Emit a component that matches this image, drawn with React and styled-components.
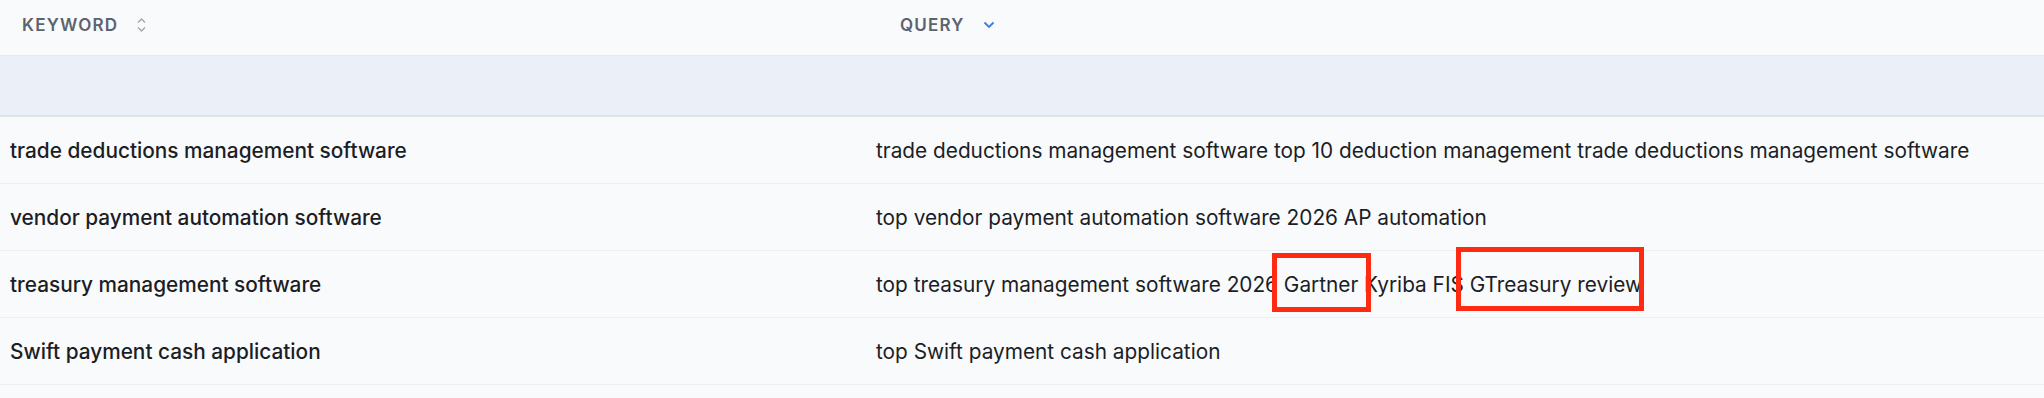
import React from "react";
import styled, { createGlobalStyle } from "styled-components";

const Global = createGlobalStyle`
  html, body { margin: 0; padding: 0; background: #f9fafb; }
  body { font-family: Inter, "Noto Sans", sans-serif; }
`;

const Table = styled.div`
  position: relative;
  width: 2044px;
  height: 398px;
  overflow: hidden;
  background: #f9fafb;
`;

const HeaderRow = styled.div`
  display: grid;
  grid-template-columns: 866px 1fr;
  height: 56px;
  border-bottom: 1px solid #e6e9f0;
  box-sizing: border-box;
`;

const HeadCell = styled.div`
  display: flex;
  align-items: center;
  gap: 18px;
  padding-left: ${(p) => p.$pad}px;
  padding-bottom: 6px;
  box-sizing: border-box;
  font-size: 17px;
  font-weight: 600;
  letter-spacing: 1.2px;
  color: #5c6370;
  text-transform: uppercase;
`;

const Band = styled.div`
  height: 61px;
  background: #ebeff7;
  border-bottom: 2px solid #dfe2e7;
  box-sizing: border-box;
`;

const Row = styled.div`
  display: grid;
  grid-template-columns: 866px 1fr;
  height: 67px;
  border-bottom: 1px solid #eceef1;
  box-sizing: border-box;
`;

const Cell = styled.div`
  display: flex;
  align-items: center;
  padding-left: 10px;
  padding-top: 1px;
  white-space: nowrap;
  font-size: 20.8px;
  font-weight: ${(p) => (p.$strong ? 500 : 400)};
  color: #1b1e26;
`;

const Mark = styled.div`
  position: absolute;
  border: 5px solid #ff2a12;
  box-sizing: border-box;
`;

const SortIcon = () => (
  <svg width="11" height="16" viewBox="0 0 11 16" fill="none">
    <path d="M2 5.5 L5.5 2 L9 5.5" stroke="#a3a7ae" strokeWidth="1.4" />
    <path d="M2 10.5 L5.5 14 L9 10.5" stroke="#a3a7ae" strokeWidth="1.4" />
  </svg>
);

const DownIcon = () => (
  <svg width="12" height="8" viewBox="0 0 12 8" fill="none">
    <path d="M1.5 1.5 L6 6 L10.5 1.5" stroke="#3b7ae8" strokeWidth="1.8" />
  </svg>
);

const rows = [
  [
    "trade deductions management software",
    "trade deductions management software top 10 deduction management trade deductions management software",
  ],
  [
    "vendor payment automation software",
    "top vendor payment automation software 2026 AP automation",
  ],
  [
    "treasury management software",
    "top treasury management software 2026 Gartner Kyriba FIS GTreasury review",
  ],
  ["Swift payment cash application", "top Swift payment cash application"],
  ["", ""],
];

export default function App() {
  return (
    <>
      <Global />
      <Table>
        <HeaderRow>
          <HeadCell $pad={22}>
            Keyword <SortIcon />
          </HeadCell>
          <HeadCell $pad={34}>
            Query <DownIcon />
          </HeadCell>
        </HeaderRow>
        <Band />
        {rows.map(([k, q], i) => (
          <Row key={i}>
            <Cell $strong>{k}</Cell>
            <Cell>{q}</Cell>
          </Row>
        ))}
        <Mark style={{ left: 1272, top: 253, width: 99, height: 59 }} />
        <Mark style={{ left: 1456, top: 247, width: 188, height: 64 }} />
      </Table>
    </>
  );
}
